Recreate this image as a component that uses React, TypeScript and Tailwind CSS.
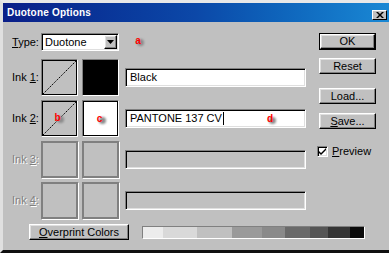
import React from "react";

const font = { fontFamily: '"Liberation Sans", Arial, sans-serif' };

const raised =
  "border border-t-white border-l-white border-r-black border-b-black shadow-[inset_-1px_-1px_0_#808080,inset_1px_1px_0_#dfdfdf] bg-[#c0c0c0]";
const sunken =
  "border border-t-[#808080] border-l-[#808080] border-r-white border-b-white shadow-[inset_1px_1px_0_#000,inset_-1px_-1px_0_#dfdfdf]";

function Marker({ ch, className }: { ch: string; className?: string }) {
  return (
    <span className={"inline-flex " + (className || "")}>
      <span className="relative inline-flex items-center justify-center w-[10px] h-[10px]">
        <span className="absolute left-[4px] top-[3px] w-[7px] h-[7px] rounded-full bg-[#8a8a8a] blur-[1px]" />
        <span className="relative text-[#ff0000] font-bold text-[10px] leading-none">{ch}</span>
      </span>
    </span>
  );
}

function Swatch({ diag, fill, disabled, children }: { diag?: boolean; fill?: string; disabled?: boolean; children?: React.ReactNode }) {
  if (disabled) {
    return <div className="w-[37px] h-[37px] border-2 border-[#808080] shadow-[1px_1px_0_#fff]" />;
  }
  return (
    <div className="relative w-[37px] h-[37px] border border-t-[#808080] border-l-[#808080] border-r-white border-b-white">
      <div className={"relative w-full h-full border border-black flex items-center justify-center " + (fill || "")}>
        {diag && (
          <svg className="absolute inset-0" width="33" height="33" viewBox="0 0 33 33">
            <line x1="0" y1="33" x2="33" y2="0" stroke="#000" strokeWidth="1" strokeDasharray="1.5 1" />
          </svg>
        )}
        {children}
      </div>
    </div>
  );
}

function Field({ text, disabled, children }: { text?: string; disabled?: boolean; children?: React.ReactNode }) {
  return (
    <div
      className={
        "relative w-[181px] h-[19px] flex items-center pl-[4px] text-[11px] text-black " +
        sunken +
        (disabled ? " bg-[#c0c0c0]" : " bg-white")
      }
    >
      {text}
      {children}
    </div>
  );
}

function InkRow({ n, disabled, diag, fill, field, swatchMarker, fillMarker }: any) {
  return (
    <div className="flex items-center h-[37px]">
      <div
        className={
          "w-[29px] text-[11px] " +
          (disabled ? "text-[#808080] [text-shadow:1px_1px_0_#fff]" : "text-black")
        }
      >
        Ink <span className="underline">{n}</span>:
      </div>
      <Swatch diag={diag} disabled={disabled}>{swatchMarker}</Swatch>
      <div className="w-[4px]" />
      <Swatch fill={fill} disabled={disabled}>{fillMarker}</Swatch>
      <div className="w-[6px]" />
      {field}
    </div>
  );
}

function Btn({ children, def }: { children: React.ReactNode; def?: boolean }) {
  const inner = (
    <div className={"w-full h-full flex items-center justify-center text-[11px] text-black " + raised}>{children}</div>
  );
  return def ? (
    <div className="w-[57px] h-[17px] border border-black">{inner}</div>
  ) : (
    <div className="w-[57px] h-[16px]">{inner}</div>
  );
}

const steps = [
  ["#ececec", 20],
  ["#d9d9d9", 34],
  ["#c0c0c0", 35],
  ["#9a9a9a", 30],
  ["#8a8a8a", 23],
  ["#6a6a6a", 25],
  ["#555555", 18],
  ["#353535", 22],
  ["#0a0a0a", 14],
] as const;

export default function App() {
  return (
    <div style={font} className="w-[389px] h-[253px] bg-[#c0c0c0] overflow-hidden flex flex-col border-t-[3px] border-t-[#e8e8e8] border-l-[3px] border-l-[#e0e0e0] border-b-[3px] border-b-[#101010]">
      <div className="h-[19px] flex items-center bg-gradient-to-r from-[#0a1e88] via-[#0c48a8] to-[#1a88d4] pl-[4px] pr-[2px] shrink-0">
        <span className="text-white font-bold text-[10px] tracking-[0.2px]">Duotone Options</span>
        <div className="ml-auto mt-[4px] w-[15px] h-[10px] flex items-center justify-center bg-[#c0c0c0] border border-t-white border-l-white border-r-black border-b-black">
          <svg width="8" height="6" viewBox="0 0 8 6">
            <path d="M0 0h2l2 2 2-2h2L5 3l3 3H6L4 4 2 6H0l3-3z" fill="#000" />
          </svg>
        </div>
      </div>
      <div className="flex flex-1">
        <div className="flex flex-col w-[316px] shrink-0 pl-[9px] pt-[11px]">
          <div className="flex items-center h-[18px]">
            <div className="w-[29px] text-[11px] text-black">
              <span className="underline">T</span>ype:
            </div>
            <div className={"w-[78px] h-[18px] flex items-center bg-white " + sunken}>
              <span className="pl-[3px] text-[11px] flex-1">Duotone</span>
              <div className={"w-[13px] h-[14px] mr-[1px] flex items-center justify-center " + raised}>
                <svg width="7" height="4" viewBox="0 0 7 4"><path d="M0 0h7L3.5 4z" fill="#000" /></svg>
              </div>
            </div>
            <Marker ch="a" className="ml-[14px] -mt-[3px]" />
          </div>
          <div className="h-[8px]" />
          <div className="flex flex-col gap-[4px]">
            <InkRow n="1" diag fill="bg-black" field={<Field text="Black" />} />
            <InkRow
              n="2"
              diag
              fill="bg-white"
              swatchMarker={<Marker ch="b" className="-mt-[2px] -ml-[4px]" />}
              fillMarker={<Marker ch="c" className="mt-[1px] -ml-[2px]" />}
              field={
                <Field>
                  <span className="text-[11px]">PANTONE 137 CV</span>
                  <span className="w-[1px] h-[13px] bg-black ml-[1px]" />
                  <Marker ch="d" className="absolute left-[139px] top-[4px]" />
                </Field>
              }
            />
            <InkRow n="3" disabled field={<Field disabled />} />
            <InkRow n="4" disabled field={<Field disabled />} />
          </div>
          <div className="flex items-center mt-[5px] pl-[17px]">
            <div className="w-[100px] h-[16px] shrink-0">
              <div className={"w-full h-full flex items-center justify-center text-[11px] " + raised}>
                <span><span className="underline">O</span>verprint Colors</span>
              </div>
            </div>
            <div className="ml-[13px] flex shrink-0 h-[13px] border border-t-[#808080] border-l-[#808080] border-r-white border-b-white">
              {steps.map(([c, w], i) => (
                <div key={i} style={{ background: c, width: w }} className="h-full shrink-0" />
              ))}
            </div>
          </div>
        </div>
        <div className="flex flex-col pt-[11px]">
          <Btn def>OK</Btn>
          <div className="h-[8px]" />
          <Btn>Reset</Btn>
          <div className="h-[14px]" />
          <Btn>Load...</Btn>
          <div className="h-[9px]" />
          <Btn>
            <span><span className="underline">S</span>ave...</span>
          </Btn>
          <div className="h-[14px]" />
          <div className="flex items-center gap-[4px] -ml-[2px]">
            <div className={"w-[11px] h-[11px] bg-white flex items-center justify-center " + sunken}>
              <svg width="7" height="7" viewBox="0 0 7 7"><path d="M0 3l2 2 5-5v2L2 7 0 5z" fill="#000" /></svg>
            </div>
            <span className="text-[11px]"><span className="underline">P</span>review</span>
          </div>
        </div>
      </div>
    </div>
  );
}
